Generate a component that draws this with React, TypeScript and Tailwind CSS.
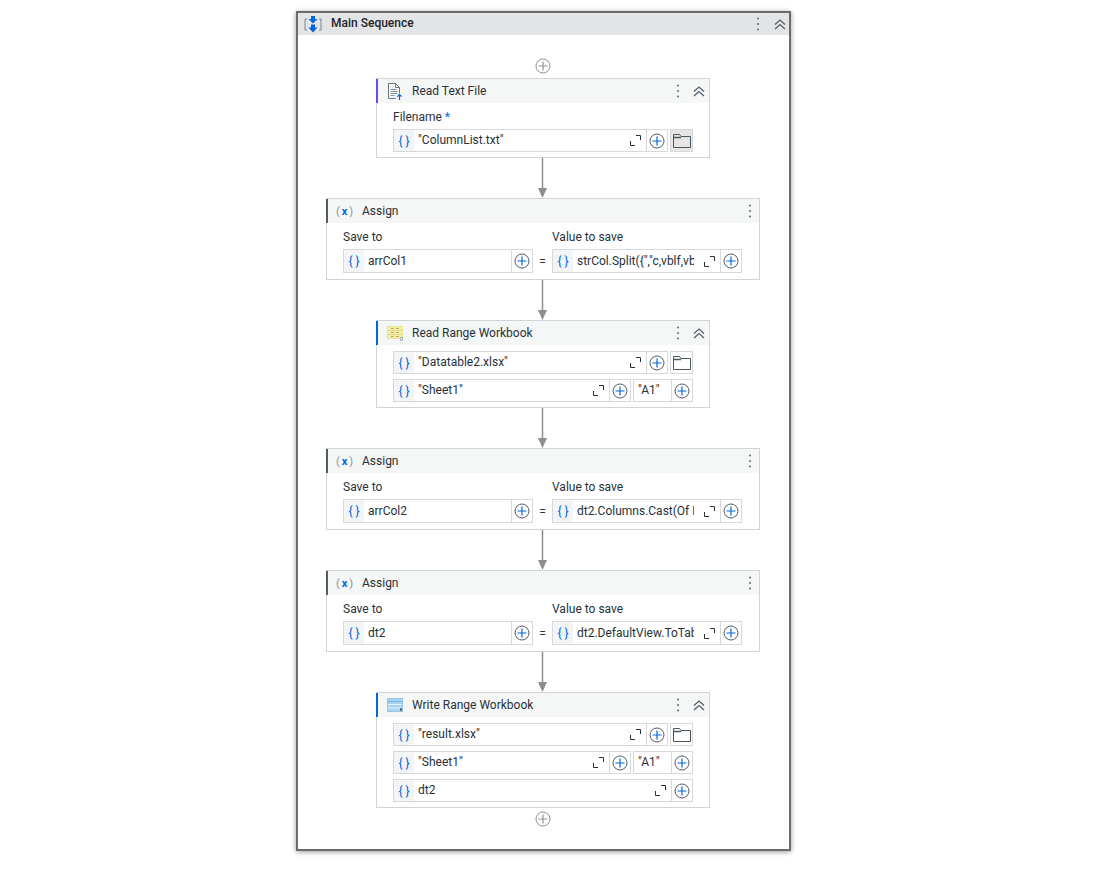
const ink = "text-[#273139]";

function Kebab() {
  return (
    <svg width="4" height="14" viewBox="0 0 4 14" className="shrink-0">
      <circle cx="2" cy="1.500" r="1.100" fill="#6b7882" />
      <circle cx="2" cy="7" r="1.100" fill="#6b7882" />
      <circle cx="2" cy="12.500" r="1.100" fill="#6b7882" />
    </svg>
  );
}

function Collapse() {
  return (
    <svg width="12" height="11" viewBox="0 0 12 11" fill="none" stroke="#526069" strokeWidth="1.300" className="shrink-0">
      <path d="M1 5.500 6 1l5 4.500" />
      <path d="M1 10 6 5.500l5 4.500" />
    </svg>
  );
}

function AddCircle({ gray }: { gray?: boolean }) {
  return (
    <svg width="16" height="16" viewBox="0 0 16 16" fill="none" className="shrink-0">
      <circle cx="8" cy="8" r="7" stroke={gray ? "#8c9499" : "#525c63"} strokeWidth="1" />
      <path d="M8 3.500v9M3.500 8h9" stroke={gray ? "#8c9499" : "#0067df"} strokeWidth="1.200" />
    </svg>
  );
}

function Expand() {
  return (
    <svg width="11" height="11" viewBox="0 0 11 11" fill="none" stroke="#273139" strokeWidth="1" className="shrink-0">
      <path d="M.5 6v4.500H5" />
      <path d="M6 .5h4.500V5" />
    </svg>
  );
}

function Folder() {
  return (
    <svg width="18" height="14" viewBox="0 0 18 14" fill="none" stroke="#4b555c" strokeWidth="1">
      <path d="M.5 13.500V.5h6l1.500 2h9.500v11z" />
      <path d="M.5 3.500h7.500" strokeWidth="1.500" />
    </svg>
  );
}

function SequenceIcon() {
  return (
    <svg width="18" height="17" viewBox="0 0 18 17" fill="none">
      <path d="M3 3H1v11h2M15 3h2v11h-2" stroke="#7a858c" strokeWidth="1" />
      <path d="M7 0h4v3h2.500L9 7.500 4.500 3H7z" fill="#0067df" />
      <path d="M7 8.500h4v3h2.500L9 16.500l-4.500-5H7z" fill="#0067df" />
    </svg>
  );
}

function ReadFileIcon() {
  return (
    <svg width="16" height="17" viewBox="0 0 16 17" fill="none">
      <path d="M8.500 15.500h-7V.5h7l4 4v6" stroke="#6e7479" />
      <path d="M8.500.5v4h4" stroke="#6e7479" />
      <path d="M3.500 6.500h6M3.500 8.500h7M3.500 10.500h7M3.500 12.500h4" stroke="#8a9095" />
      <path d="M12.500 17v-5.500M10.300 13.700l2.200-2.200 2.200 2.200" stroke="#0067df" strokeWidth="1.200" />
    </svg>
  );
}

function ReadRangeIcon() {
  return (
    <svg width="16" height="15" viewBox="0 0 16 15" fill="none">
      <rect x=".5" y=".5" width="15" height="12" fill="#f5eea8" stroke="#ece39a" />
      <path d="M1 4.500h14M1 8.500h14" stroke="#e2d88c" />
      <path d="M4 2.500h3M9 2.500h3M4 6.500h3M9 6.500h3M4 10.500h3M9 10.500h3" stroke="#b5ab6c" />
      <path d="M13.500 11.500h2v3h-2z" fill="#fff" stroke="#a7adb2" />
    </svg>
  );
}

function WriteRangeIcon() {
  return (
    <svg width="16" height="14" viewBox="0 0 16 14" fill="none">
      <rect x=".5" y=".5" width="15" height="13" fill="#a9d3f0" stroke="#9cc8e8" />
      <path d="M1 3.500h14" stroke="#7fb5dd" />
      <path d="M1 6.500h14M1 10h14" stroke="#e6f3fc" />
      <path d="M13 10h2v3h-2z" fill="#5b7585" />
    </svg>
  );
}

function AssignIcon() {
  return (
    <span className="flex w-[16px] shrink-0 items-center justify-center gap-[2px] text-[11px] leading-none text-[#8a949b]">
      <span>(</span>
      <span className="font-bold text-[#0067df]">x</span>
      <span>)</span>
    </span>
  );
}

function Field({ text, expand = true, brace = true, className = "", h = "h-[23px]" }: { text: string; expand?: boolean; brace?: boolean; className?: string; h?: string }) {
  return (
    <div className={`flex min-w-0 items-stretch border border-[#d5d9dc] bg-white ${h} ${className}`}>
      {brace && (
        <div className="flex w-[20px] shrink-0 items-center justify-center bg-[#f3f4f5] text-[12px] text-[#0067df]">{"{ }"}</div>
      )}
      <div className={`flex min-w-0 flex-1 items-center pl-[4px] ${expand ? "pr-[10px]" : "pr-1"}`}>
        <span className={`block overflow-hidden whitespace-pre pb-[1px] text-[12px] ${ink}`}>{text}</span>
      </div>
      {expand && (
        <div className="flex w-[16px] shrink-0 items-center justify-start">
          <Expand />
        </div>
      )}
      <div className="flex w-[21px] shrink-0 items-center justify-center border-l border-[#d5d9dc]">
        <AddCircle />
      </div>
    </div>
  );
}

function FileRow({ text, active }: { text: string; active?: boolean }) {
  return (
    <div className="flex gap-[2px]">
      <Field text={text} className="flex-1" />
      <div className={`flex h-[23px] w-[23px] shrink-0 items-center justify-center border border-[#d5d9dc] ${active ? "bg-[#e6e6e6]" : "bg-white"}`}>
        <Folder />
      </div>
    </div>
  );
}

function SheetRow() {
  return (
    <div className="flex gap-[2px]">
      <Field text={'"Sheet1"'} className="flex-1" />
      <Field text={'"A1"'} expand={false} brace={false} className="w-[60px] shrink-0" />
    </div>
  );
}

function Card({ title, icon, accent, wide, collapse = true, children }: { title: string; icon: React.ReactNode; accent: string; wide?: boolean; collapse?: boolean; children: React.ReactNode }) {
  return (
    <div className={`border border-[#ced4d8] bg-white ${wide ? "w-[434px]" : "w-[334px]"}`}>
      <div className={`-ml-px flex h-[24px] items-center border-l-2 bg-[#f5f6f6] pl-[8px] ${accent}`}>
        <div className="flex w-[17px] shrink-0 items-center justify-center">{icon}</div>
        <span className={`ml-[9px] pb-[1px] text-[12px] ${ink}`}>{title}</span>
        <div className="ml-auto flex items-center">
          <Kebab />
          {collapse ? (
            <div className="ml-[13px] mr-[4px]">
              <Collapse />
            </div>
          ) : (
            <div className="w-[7px]" />
          )}
        </div>
      </div>
      {children}
    </div>
  );
}

function Assign({ to, value }: { to: string; value: string }) {
  return (
    <Card title="Assign" icon={<AssignIcon />} accent="border-[#555c61]" wide collapse={false}>
      <div className="grid grid-cols-[190px_19px_190px] px-4 pb-[6px] pt-[6px]">
        <div className={`pb-[4px] text-[12px] leading-[16px] ${ink}`}>Save to</div>
        <div />
        <div className={`pb-[4px] text-[12px] leading-[16px] ${ink}`}>Value to save</div>
        <Field text={to} expand={false} h="h-[24px]" />
        <div className={`flex items-center justify-center pt-[1px] text-[12px] ${ink}`}>=</div>
        <Field text={value} h="h-[24px]" />
      </div>
    </Card>
  );
}

function Arrow() {
  return (
    <svg width="14" height="40" viewBox="0 0 14 40" className="block shrink-0">
      <path d="M6.500 0v32" stroke="#8c8f91" strokeWidth="1.500" />
      <path d="M2 30h9L6.500 40z" fill="#8c8f91" />
    </svg>
  );
}

export default function App() {
  return (
    <div className="min-h-[876px] bg-white pt-[11px] pl-[296px] font-['Roboto','Noto_Sans',sans-serif]">
      <div className="h-[840px] w-[495px] border-2 border-[#6b6b6b] bg-white shadow-[0_1px_5px_rgba(0,0,0,0.4)]">
        <div className="flex h-[22px] items-center bg-[#e3e4e6] pl-[6px]">
          <SequenceIcon />
          <span className="ml-[9px] pb-[2px] text-[12px] font-medium text-[#1d2429]">Main Sequence</span>
          <div className="ml-auto flex items-center">
            <Kebab />
            <div className="ml-[14px] mr-[3px]">
              <Collapse />
            </div>
          </div>
        </div>

        <div className="flex flex-col items-center pr-px pt-[23px]">
          <AddCircle gray />
          <div className="h-[4px]" />

          <Card title="Read Text File" icon={<ReadFileIcon />} accent="border-[#5f4bff]">
            <div className="px-4 pb-[5px] pt-[6px]">
              <div className={`pb-[4px] text-[12px] leading-[16px] ${ink}`}>
                Filename <span className="text-[#0067df]">*</span>
              </div>
              <FileRow text={'"ColumnList.txt"'} active />
            </div>
          </Card>
          <Arrow />

          <Assign to="arrCol1" value={'strCol.Split({","c,vblf,vb'} />
          <Arrow />

          <Card title="Read Range Workbook" icon={<ReadRangeIcon />} accent="border-[#0067df]">
            <div className="flex flex-col gap-[5px] px-4 pb-[5px] pt-[6px]">
              <FileRow text={'"Datatable2.xlsx"'} />
              <SheetRow />
            </div>
          </Card>
          <Arrow />

          <Assign to="arrCol2" value="dt2.Columns.Cast(Of D" />
          <Arrow />

          <Assign to="dt2" value="dt2.DefaultView.ToTabl" />
          <Arrow />

          <Card title="Write Range Workbook" icon={<WriteRangeIcon />} accent="border-[#0067df]">
            <div className="flex flex-col gap-[5px] px-4 pb-[5px] pt-[6px]">
              <FileRow text={'"result.xlsx"'} />
              <SheetRow />
              <Field text="dt2" />
            </div>
          </Card>
          <div className="h-[3px]" />
          <AddCircle gray />
        </div>
      </div>
    </div>
  );
}
